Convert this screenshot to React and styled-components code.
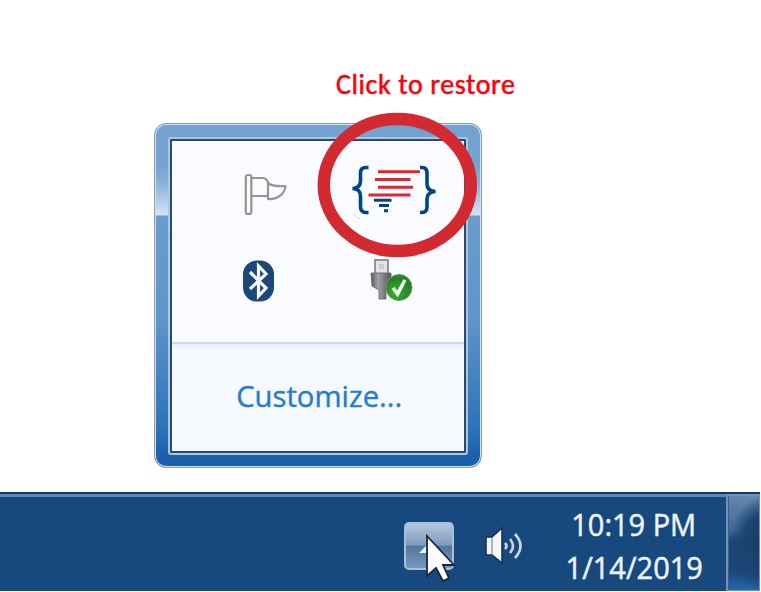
import React from 'react';
import styled, { createGlobalStyle } from 'styled-components';

const Global = createGlobalStyle`
  * { box-sizing: border-box; }
  body { margin: 0; background: #fff; overflow: hidden; }
`;

const Page = styled.main`
  width: 761px;
  height: 592px;
  display: flex;
  flex-direction: column;
  background: #fff;
  overflow: hidden;
`;

const Caption = styled.p`
  margin: 69px 0 0 336px;
  height: 54px;
  font: 500 28px/32px Carlito, Lato, sans-serif;
  letter-spacing: 0.6px;
  -webkit-text-stroke: 0.5px #fb0007;
  color: #fb0007;
  white-space: nowrap;
`;

const Flyout = styled.section`
  position: relative;
  width: 328px;
  height: 345px;
  margin-left: 154px;
  padding: 15px 15px 14px;
  border: 1px solid #8d9bab;
  border-radius: 12px;
  box-shadow: inset 0 0 0 1px #d3e2f1;
  background: linear-gradient(
    #74a2d0 0, #73a3d2 40px, #86afd8 58px, #d3e2f2 90px,
    #d3e2f2 91px, #6a9ccd 92px, #6096cb 190px, #2b71b8 310px, #1b61aa 330px
  );
`;

const Panel = styled.div`
  height: 100%;
  display: flex;
  flex-direction: column;
  border: 2px solid #2c4a6a;
  outline: 2px solid #a9c7e4;
  border-radius: 1px;
  background: #f9fbff;
`;

const IconGrid = styled.div`
  height: 201px;
  padding: 0 8px;
  display: grid;
  grid-template: 107px 65px / 156px 112px;
  place-items: center;
  justify-content: start;
`;

const Slot = styled.span`
  display: flex;
  margin-left: ${(p) => p.$shift || 0}px;
`;

const Footer = styled.footer`
  flex: 1;
  display: flex;
  justify-content: center;
  align-items: center;
  padding: 0 0 3px 3px;
  border-top: 2px solid #c8dbea;
  background: linear-gradient(#e5eff8, #f5f9fe 5px, #f5f9fe);
`;

const Squeeze = styled.span`
  display: inline-block;
  flex: none;
  white-space: nowrap;
  transform: scaleX(${(p) => p.$x});
`;

const Customize = styled.a`
  font: 400 30px/40px "Open Sans", sans-serif;
  -webkit-text-stroke: 0.4px #257bd0;
  color: #257bd0;
`;

const Highlight = styled.svg`
  position: absolute;
  left: 162px;
  top: -13px;
`;

const Taskbar = styled.footer`
  width: 760px;
  height: 99px;
  margin-top: 24px;
  display: flex;
  border-top: 2px solid #123964;
  background: #17497f;
`;

const Tray = styled.div`
  width: 726px;
  display: flex;
  justify-content: flex-end;
  border-top: 3px solid #6286af;
`;

const TrayButton = styled.button`
  position: relative;
  width: 50px;
  height: 48px;
  margin: 25px 29px 0 0;
  padding: 0;
  border: 2px solid #a9bfd8;
  border-radius: 5px;
  background: linear-gradient(#b5c7da, #7f9cbd 48%, #50779f 50%, #7797bc);
`;

const Cursor = styled.svg`
  position: absolute;
  left: 19px;
  top: 9px;
`;

const Chevron = styled.svg`
  position: absolute;
  left: 13px;
  top: 20px;
`;

const SpeakerSlot = styled.div`
  width: 44px;
  margin: 27px 27px 0 0;
`;

const Clock = styled.div`
  width: 160px;
  margin-right: 12px;
  padding-top: 6px;
  display: flex;
  flex-direction: column;
  align-items: center;
  font: 400 30.5px/43px "Open Sans", sans-serif;
  -webkit-text-stroke: 0.5px #edf3fb;
  color: #edf3fb;
`;

const ShowDesktop = styled.div`
  width: 34px;
  border: solid #7291b5;
  border-width: 2px 1px 1px 2px;
  box-shadow: inset 1px 0 #355f8d;
  background: radial-gradient(ellipse 34px 48px at 36px 48px, #183a62 0, #1d4470 60%, transparent 100%),
    linear-gradient(#6787ad, #43699a 35%, #1b4677 48%, #1a4679 80%, #2468ac);
`;

const FlagIcon = () => (
  <svg width="44" height="44" viewBox="0 0 44 44" fill="#fbfbfd" stroke="#949494" strokeWidth="2.2" strokeLinejoin="round">
    <path d="M7 5H19Q22 5 24 9L25 23H7Z" />
    <path d="M24 10.500Q31 14 41.500 13C41 21 33 27 24 26Z" />
    <rect x="1.800" y="2" width="5.500" height="39" rx="2" />
  </svg>
);

const BluetoothIcon = () => (
  <svg width="34" height="42" viewBox="0 0 34 42">
    <rect x="1" y="0.500" width="31" height="41" rx="14" fill="#1c4777" />
    <path d="M8 12L24 28L16.500 36V6L24 14L8 29" fill="none" stroke="#f4f9ff" strokeWidth="3.200" />
  </svg>
);

const UsbIcon = () => (
  <svg width="44" height="44" viewBox="0 0 44 44">
    <defs>
      <linearGradient id="plug">
        <stop offset="0" stopColor="#555558" />
        <stop offset=".35" stopColor="#a4a4a8" />
        <stop offset="1" stopColor="#515155" />
      </linearGradient>
      <radialGradient id="ok" cx=".4" cy=".7">
        <stop offset="0" stopColor="#36b52a" />
        <stop offset="1" stopColor="#26832a" />
      </radialGradient>
    </defs>
    <rect x="5" y="1" width="13" height="14" fill="#e3e4e8" stroke="#939399" strokeWidth="2" />
    <path d="M9 5h5v5h-5z" fill="#c9cbd1" />
    <path d="M1 14H21V27L16 31V40H9V31L2 27Z" fill="url(#plug)" stroke="#727276" />
    <circle cx="29" cy="28.500" r="13" fill="url(#ok)" stroke="#6b9c68" />
    <path d="M23 29L27.500 35L35 21" fill="none" stroke="#f3fff0" strokeWidth="3.500" />
  </svg>
);

const RestoreMark = () => (
  <Highlight width="162" height="150" viewBox="317 111 162 150" fill="none">
    <ellipse cx="397.300" cy="185" rx="73.500" ry="66" stroke="#d32931" strokeWidth="12.500" />
    <g stroke="#004586" strokeWidth="3.600">
      <path d="M368.500 167.500H366Q360.500 167.500 360.500 173V181Q360.500 188 352.500 188.500Q360.500 189 360.500 196V206Q360.500 212.500 366 212.500H368.500" />
      <path d="M420 167.500H422Q427 167.500 427 173V184Q427 191 435.500 191.500Q427 192 427 199V207Q427 212.500 422 212.500H420" />
    </g>
    <g strokeWidth="3" stroke="#d92932">
      <path d="M378 171.800H420M375 179.500H410.500M378 187.200H413M368.500 194.900H410.500" />
      <path stroke="#004586" d="M374 200.300H391.500M379 205.600H389M384 210.700H388" />
    </g>
    <path d="M354 214Q356 218 361 218.500" stroke="#b9cadd" strokeDasharray="2 1" />
  </Highlight>
);

const SpeakerIcon = () => (
  <svg width="44" height="44" viewBox="0 0 44 44">
    <path d="M3 13H9L19 4V39L9 31H3Z" fill="#f4f6fa" stroke="#102f50" strokeWidth="1.500" />
    <path d="M9 14V30" stroke="#65788f" />
    <g fill="none" stroke="#c7d9e9" strokeWidth="2.600">
      <path d="M22 19Q25 22 22 25M27 15Q33 22 27 29M32 10Q43 22 32 34" />
    </g>
  </svg>
);

export default function App() {
  return (
    <Page>
      <Global />
      <Caption>Click to restore</Caption>
      <Flyout>
        <Panel>
          <IconGrid>
            <Slot $shift={16}><FlagIcon /></Slot>
            <Slot />
            <Slot $shift={2}><BluetoothIcon /></Slot>
            <Slot><UsbIcon /></Slot>
          </IconGrid>
          <Footer>
            <Customize><Squeeze $x={0.975}>Customize...</Squeeze></Customize>
          </Footer>
        </Panel>
        <RestoreMark />
      </Flyout>
      <Taskbar>
        <Tray>
          <TrayButton aria-label="Show hidden icons">
            <Chevron width="16" height="10" viewBox="0 0 16 10"><path d="M0 9L8 1L16 9Z" fill="#eef4fa" /></Chevron>
            <Cursor width="34" height="52" viewBox="0 0 34 52">
              <path d="M2 3V43L11 35L18 48L24 45L18 32H29Z" fill="#fafaff" stroke="#182638" strokeWidth="1.800" />
            </Cursor>
          </TrayButton>
          <SpeakerSlot><SpeakerIcon /></SpeakerSlot>
          <Clock>
            <Squeeze $x={0.95}>10:19 PM</Squeeze>
            <Squeeze $x={0.95}>1/14/2019</Squeeze>
          </Clock>
        </Tray>
        <ShowDesktop />
      </Taskbar>
    </Page>
  );
}
